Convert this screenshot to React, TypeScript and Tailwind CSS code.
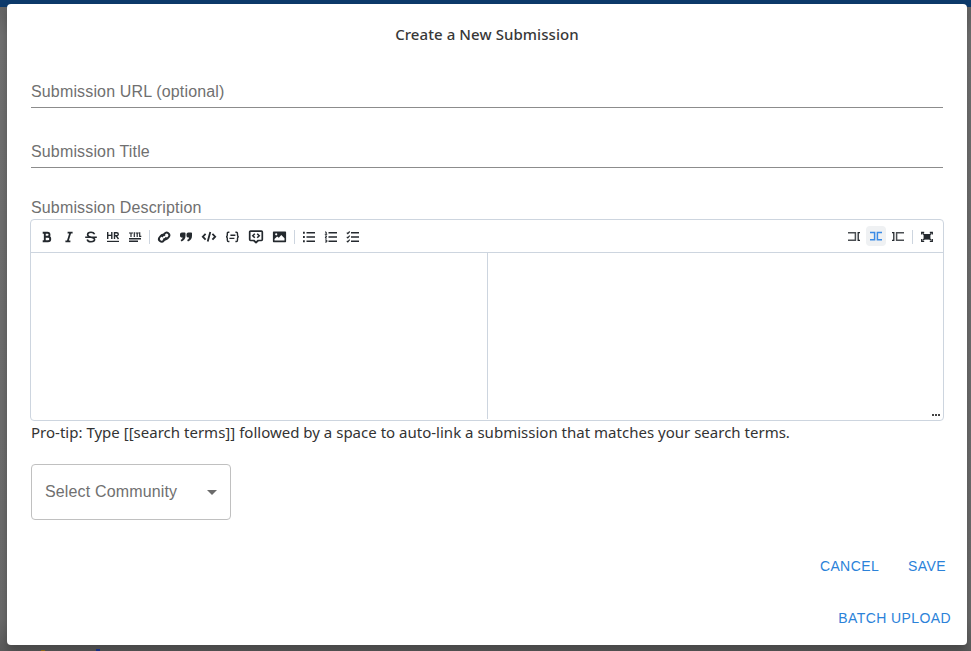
import type { ReactNode } from "react";

const ARIAL = "font-['Liberation_Sans',Arial,sans-serif]";

function Icon({ children, w = "w-[22px]", active = false }: { children: ReactNode; w?: string; active?: boolean }) {
  return (
    <button className={`flex h-5 shrink-0 items-center justify-center ${w} ${active ? "text-[#3b8be6]" : "text-[#24292e]"}`}>
      <svg width="16" height="16" viewBox="0 0 16 16" fill="none" stroke="currentColor" strokeWidth="1.5" className="shrink-0">
        {children}
      </svg>
    </button>
  );
}

function Divider({ m }: { m: string }) {
  return <span className={`h-[14px] w-px shrink-0 bg-[#cdd5df] ${m}`} />;
}

function LeftTools() {
  return (
    <div className="flex items-center">
      <Icon><path strokeWidth="1.9" d="M3.7 3.7h4.8a2 2 0 0 1 0 4H5.8M5.8 7.8H9a2.2 2.2 0 0 1 0 4.5H3.7M5.8 3.8v8.4" /></Icon>
      <Icon><path d="M6.6 3.6h5M4.4 12.4h5M9.4 3.6 6.6 12.4" strokeWidth="1.8" /></Icon>
      <Icon><path d="M2.2 8.2h11.6M11.6 5.3C11 3.9 9.8 3.3 8 3.3c-2.1 0-3.4.9-3.4 2.4 0 1.6 1.7 2.1 3.6 2.6s3.4 1 3.4 2.3-1.4 2.2-3.6 2.2c-2 0-3.4-.8-3.8-2.3" strokeWidth="1.6" /></Icon>
      <Icon><path d="M2.7 3v7M6.8 3v7M2.7 6.4h4.1M9.5 10V3.7h2.2a1.4 1.4 0 0 1 0 3.1H9.5M11.2 6.8l2.3 3.2" strokeWidth="1.4" /><path d="M2 12.4h12" strokeWidth="1.2" /></Icon>
      <Icon><path d="M2 4h4M4 4v4M7.3 3.3V8M8.6 4h3.2M10.2 4v4M12.7 3.3v4.1h1.6" strokeWidth="1.2" /><path d="M2 9.7h12M2 12.3h9" strokeWidth="1.5" /></Icon>
      <Divider m="ml-[3px] mr-[3px]" />
      <Icon>
        <g transform="rotate(-50 8 8)" strokeWidth="1.9">
          <path d="M9.4 10.2H5a2.7 2.7 0 0 1 0-5.4h2.2a2.7 2.7 0 0 1 2.5 3" />
          <path d="M6.6 6.2H11a2.7 2.7 0 0 1 0 5.4H8.8a2.7 2.7 0 0 1-2.5-3" />
        </g>
      </Icon>
      <Icon><path fill="currentColor" stroke="none" d="M6.7 3.4H3.9A1.9 1.9 0 0 0 2 5.3v1.4c0 1.1.8 1.8 1.9 1.8h.7c-.1 1.2-.8 2-2 2.6l.9 1.5c2.7-1.1 4-3 4-5.8V4.2c0-.5-.3-.8-.8-.8ZM13.2 3.4h-2.8a1.9 1.9 0 0 0-1.9 1.9v1.4c0 1.1.8 1.8 1.9 1.8h.7c-.1 1.2-.8 2-2 2.6l.9 1.5c2.7-1.1 4-3 4-5.8V4.2c0-.5-.3-.8-.8-.8Z" /></Icon>
      <Icon w="w-6"><path strokeWidth="1.8" d="M4.6 4.8 1.8 7.7l2.8 2.9M11.4 4.8l2.8 2.9-2.8 2.9M9.3 3 6.7 12.5" /></Icon>
      <Icon w="w-[23px]"><g transform="translate(-.6 0)"><path d="M5 3.2H4c-1 0-1.1.6-1.1 1.6v1.5c0 .9-.4 1.5-1.3 1.5.9 0 1.3.6 1.3 1.5v1.6c0 1 .1 1.6 1.1 1.6h1M11 3.2h1c1 0 1.1.6 1.1 1.6v1.5c0 .9.4 1.5 1.3 1.5-.9 0-1.3.6-1.3 1.5v1.6c0 1-.1 1.6-1.1 1.6h-1M6 6.3h5M5 9.4h5" strokeWidth="1.4" /></g></Icon>
      <Icon w="w-6"><path d="M2.6 2.2h10.8c.6 0 .9.3.9.9v7.5c0 .6-.3.9-.9.9h-3.2L8 13.5l-2.2-2H2.6c-.6 0-.9-.3-.9-.9V3.1c0-.6.3-.9.9-.9Z" strokeWidth="1.7" strokeLinejoin="round" /><path d="M6.8 4.7 4.8 6.7l2 2M9.2 4.7l2 2-2 2" strokeWidth="1.6" /></Icon>
      <Icon w="w-[23px]"><g transform="translate(-.5 0)"><path fillRule="evenodd" fill="currentColor" stroke="none" d="M2.4 2.4h11.2c.6 0 1 .4 1 1v8.8c0 .6-.4 1-1 1H2.4c-.6 0-1-.4-1-1V3.4c0-.6.4-1 1-1ZM3 11.4h10V9.2L9.8 5.9 7.3 8.8 5.6 7.4 3 10.1v1.3ZM4.7 4.2a1.1 1.1 0 1 0 0 2.2 1.1 1.1 0 0 0 0-2.2Z" /></g></Icon>
      <Divider m="ml-[3px] mr-[3px]" />
      <Icon><path d="M2 3.8h1.8M2 8h1.8M2 12.2h1.8" strokeWidth="1.9" /><path d="M5.5 3.8H14M5.5 8H14M5.5 12.2H14" strokeWidth="1.6" /></Icon>
      <Icon><path d="M2 3h1.2v2.2M1.8 5.3h2.4M2 7h1.8L2 9h2M2 11h1.8v2H2M3 12h.8" strokeWidth="1" /><path d="M5.5 3.8H14M5.5 8H14M5.5 12.2H14" strokeWidth="1.6" /></Icon>
      <Icon><path d="m1.8 3.7 1 1 1.9-2.2M1.8 7.8l1 1 1.9-2.2M1.8 11.9l1 1 1.9-2.2" strokeWidth="1.2" /><path d="M6 3.8h8M6 8h8M6 12.2h8" strokeWidth="1.6" /></Icon>
    </div>
  );
}

function RightTools() {
  return (
    <div className="flex items-center">
      <Icon><path d="M2 3.7h7.4v7.6H2" stroke="#4b4f53" /><path d="M14 3.6h-1.8v7.8H14" strokeWidth="1.3" /></Icon>
      <div className="mb-px ml-px mr-px flex h-5 w-5 items-center justify-center rounded-sm bg-[#eff1f3]">
        <Icon active w="w-5"><path d="M2 4.4h4.6v7.4H2M14 4.4H9.4v7.4H14" /></Icon>
      </div>
      <Icon><path d="M2 3.6h1.8v7.8H2" strokeWidth="1.3" /><path d="M14 3.7H6.6v7.6H14" stroke="#4b4f53" /></Icon>
      <Divider m="ml-[3px] mr-[3px]" />
      <Icon>
        <path d="M5.2 3.3H2.7v2.3M10.8 3.3h2.5v2.3M5.2 12.3H2.7V10M10.8 12.3h2.5V10" strokeWidth="1.3" />
        <rect x="4.6" y="5" width="6.8" height="5.6" fill="currentColor" stroke="none" />
        <path d="m3.6 4.2 2 1.8M12.4 4.2l-2 1.8M3.6 11.4l2-1.8M12.4 11.4l-2-1.8" strokeWidth="1.2" />
      </Icon>
    </div>
  );
}

function Field({ label }: { label: string }) {
  return (
    <div className="h-8 border-b border-[#8c8c8c]">
      <div className={`text-base leading-8 tracking-[0.15px] text-[#707070] ${ARIAL}`}>{label}</div>
    </div>
  );
}

export default function App() {
  return (
    <div className="h-[651px] w-[971px] overflow-hidden bg-[#666] bg-[linear-gradient(to_bottom,#0d3a6b_0,#0d3a6b_7px,#646464_7px,#717171_35px,#6b6b6b_95%,#5b5b5b_100%)] pl-[7px] pt-1 font-['Noto_Sans',sans-serif]">
      <main className="flex h-[641px] w-[960px] flex-col rounded bg-white px-6 shadow-[0_6px_10px_rgba(0,0,0,0.25)]">
        <h1 className="mt-[18px] text-center text-[15px] font-medium leading-6 tracking-[0.08px] text-[#383838]">Create a New Submission</h1>
        <div className="mt-[30px]"><Field label="Submission URL (optional)" /></div>
        <div className="mt-7"><Field label="Submission Title" /></div>
        <div className={`mt-[29px] text-base leading-[22px] tracking-[0.15px] text-[#707070] ${ARIAL}`}>Submission Description</div>
        <section className="-ml-px flex h-[202px] w-[914px] shrink-0 flex-col rounded border border-[#cdd5df]">
          <div className="flex h-[33px] items-center justify-between border-b border-[#cdd5df] pl-[5px] pr-[5px] pt-px">
            <LeftTools />
            <RightTools />
          </div>
          <div className="flex flex-1">
            <div className="mb-px w-[457px] border-r border-[#cdd5df]" />
            <div className="flex flex-1 items-end justify-end gap-px pb-1 pr-[3px]">
              <i className="size-[2px] bg-[#444]" />
              <i className="size-[2px] bg-[#444]" />
              <i className="size-[2px] bg-[#444]" />
            </div>
          </div>
        </section>
        <p className="-mt-px whitespace-nowrap text-[15px] leading-6 tracking-[0.01px] text-[#333]">Pro-tip: Type [[search terms]] followed by a space to auto-link a submission that matches your search terms.</p>
        <button className={`mt-5 flex h-14 w-[200px] shrink-0 items-center justify-between rounded border border-[#c0c0c0] pl-[13px] pr-[13px] text-base tracking-[0.15px] text-[#707070] ${ARIAL}`}>
          Select Community
          <svg width="10" height="5" viewBox="0 0 10 5" className="mt-px" fill="#6b6b6b"><path d="M0 0h10L5 5z" /></svg>
        </button>
        <div className={`mt-[34px] flex justify-end gap-[29px] text-sm leading-6 tracking-[0.4px] text-[#2b82d9] ${ARIAL}`}>
          <button>CANCEL</button>
          <button className="-mr-[3px]">SAVE</button>
        </div>
        <div className={`mt-7 flex justify-end text-sm leading-6 tracking-[0.4px] text-[#2b82d9] ${ARIAL}`}>
          <button className="-mr-2">BATCH UPLOAD</button>
        </div>
      </main>
      <div className="flex">
        <i className="ml-[34px] mt-[5px] h-px w-1 bg-[#8a6510]" />
        <i className="ml-[51px] mt-1 h-0.5 w-1 bg-[#162f80]" />
      </div>
    </div>
  );
}
